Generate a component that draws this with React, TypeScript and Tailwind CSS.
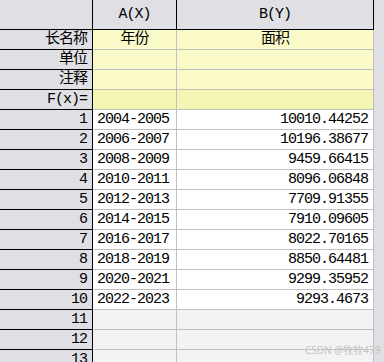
import React from "react";

const data: [string, string][] = [
  ["2004-2005", "10010.44252"],
  ["2006-2007", "10196.38677"],
  ["2008-2009", "9459.66415"],
  ["2010-2011", "8096.06848"],
  ["2012-2013", "7709.91355"],
  ["2014-2015", "7910.09605"],
  ["2016-2017", "8022.70165"],
  ["2018-2019", "8850.64481"],
  ["2020-2021", "9299.35952"],
  ["2022-2023", "9293.4673"],
];

const font = { fontFamily: "'Liberation Mono', 'Noto Sans CJK SC', monospace" };

function RowHead({ children }: { children?: React.ReactNode }) {
  return (
    <div className="w-[93px] h-full shrink-0 bg-[#e0dfe3] border-r border-b border-black flex items-center justify-end pr-[5px] text-[15px] tracking-[-1px] leading-none">
      {children}
    </div>
  );
}

export default function App() {
  const meta: { label: string; a: string; b: string; bg: string }[] = [
    { label: "长名称", a: "年份", b: "面积", bg: "bg-[#fafac8]" },
    { label: "单位", a: "", b: "", bg: "bg-[#fafac8]" },
    { label: "注释", a: "", b: "", bg: "bg-[#fafac8]" },
    { label: "F(x)=", a: "", b: "", bg: "bg-[#f5f5b4]" },
  ];
  return (
    <div className="w-[384px] h-[362px] overflow-hidden bg-[#e0dfe3] relative flex text-black" style={font}>
      <div className="w-[374px] shrink-0 flex flex-col">
        {/* header */}
        <div className="flex h-[30px] shrink-0">
          <div className="w-[93px] h-full shrink-0 bg-[#e0dfe3] border-r border-b border-black" />
          <div className="w-[84px] h-full shrink-0 bg-[#e0dfe3] border-r border-b border-black flex items-center justify-center text-[15px] tracking-[-1px] leading-none">
            A(X)
          </div>
          <div className="w-[197px] h-full shrink-0 bg-[#e0dfe3] border-r border-b border-black flex items-center justify-center text-[15px] tracking-[-1px] leading-none">
            B(Y)
          </div>
        </div>
        {meta.map((m) => (
          <div key={m.label} className="flex h-[20px] shrink-0">
            <RowHead>{m.label}</RowHead>
            <div className={`w-[84px] h-full shrink-0 ${m.bg} border-r border-b border-[#c0c0c0] flex items-center justify-center text-[15px] tracking-[-1px] leading-none`}>
              {m.a}
            </div>
            <div className={`w-[197px] h-full shrink-0 ${m.bg} border-r border-b border-[#c0c0c0] flex items-center justify-center text-[15px] tracking-[-1px] leading-none`}>
              {m.b}
            </div>
          </div>
        ))}
        {data.map((d, i) => (
          <div key={i} className="flex h-[20px] shrink-0">
            <RowHead>{i + 1}</RowHead>
            <div className="w-[84px] h-full shrink-0 bg-white border-r border-b border-[#c0c0c0] flex items-center justify-start pl-[4px] text-[15px] tracking-[-1px] leading-none">
              {d[0]}
            </div>
            <div className="w-[197px] h-full shrink-0 bg-white border-r border-b border-[#c0c0c0] flex items-center justify-end pr-[5px] text-[15px] tracking-[-1px] leading-none">
              {d[1]}
            </div>
          </div>
        ))}
        {[11, 12, 13].map((n) => (
          <div key={n} className="flex h-[20px] shrink-0">
            <RowHead>{n}</RowHead>
            <div className="w-[84px] h-full shrink-0 bg-[#f3f3f3] border-r border-b border-[#c0c0c0]" />
            <div className="w-[197px] h-full shrink-0 bg-[#f3f3f3] border-r border-b border-[#c0c0c0]" />
          </div>
        ))}
      </div>
      <div className="flex-1 bg-[#e0dfe3]" />
      <div
        className="absolute left-[305px] top-[345px] text-[10px] leading-none text-[#c4c4c4] whitespace-nowrap"
        style={{ fontFamily: "'Noto Sans', 'Noto Sans CJK SC', sans-serif" }}
      >
        CSDN @牧牧479
      </div>
    </div>
  );
}
